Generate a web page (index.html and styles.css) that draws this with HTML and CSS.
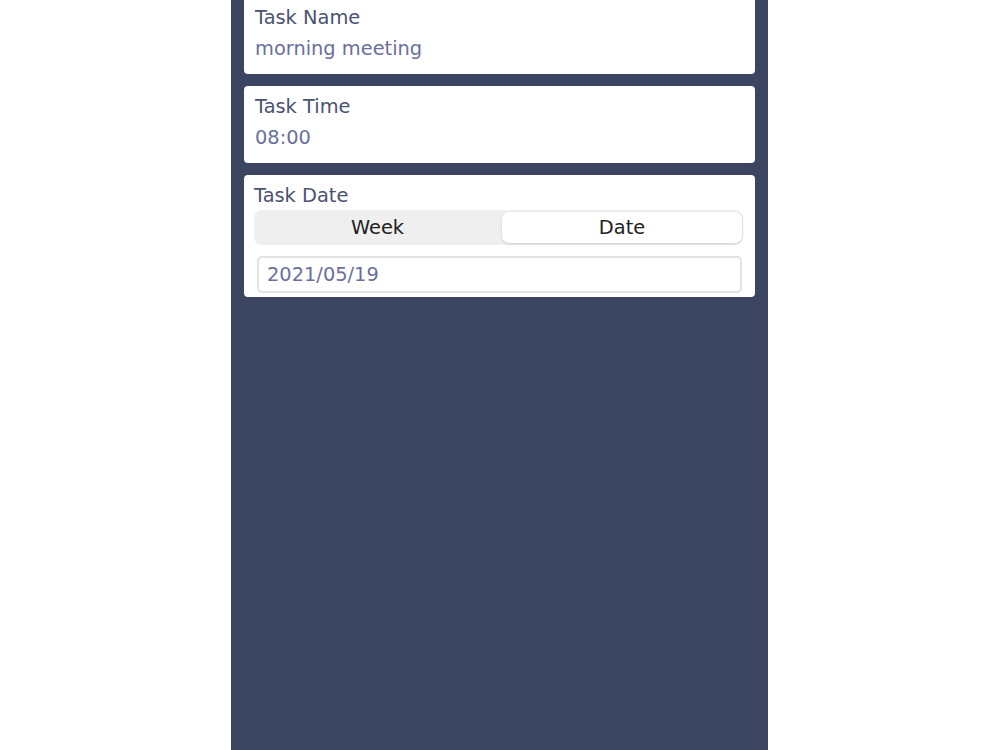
FILE: index.html
```html
<!DOCTYPE html>
<html lang="en">

<head>
  <meta charset="utf-8">
  <meta name="viewport" content="width=device-width, initial-scale=1">
  <title>Task</title>
  <link rel="stylesheet" href="styles.css">
</head>

<body>
  <div class="screen">
    <div class="card first">
      <p class="label">Task Name</p>
      <p class="value">morning meeting</p>
    </div>

    <div class="card">
      <p class="label">Task Time</p>
      <p class="value">08:00</p>
    </div>

    <div class="card date-card">
      <p class="label">Task Date</p>
      <div class="segmented">
        <button type="button" class="segment">Week</button>
        <button type="button" class="segment active">Date</button>
      </div>
      <input class="date-input" type="text" value="2021/05/19">
    </div>
  </div>
</body>

</html>
```

FILE: styles.css
```css
* {
  margin: 0;
  padding: 0;
  box-sizing: border-box;
}

html,
body {
  height: 100%;
}

body {
  font-family: 'DejaVu Sans', sans-serif;
  font-size: 19.4px;
  background-color: #fff;
  display: flex;
  justify-content: center;
}

.screen {
  width: 537px;
  margin-right: 1px;
  height: 100%;
  background-color: #3b4461;
  padding: 0 13px;
  display: flex;
  flex-direction: column;
  gap: 12px;
  overflow: hidden;
}

.card {
  background-color: #fff;
  border-radius: 4px;
  padding: 9px 11px 14px;
}

.card.first {
  margin-top: -3px;
}

.label {
  color: #4b5271;
  line-height: 23px;
}

.value {
  color: #6a6f9e;
  line-height: 23px;
  margin-top: 8px;
}

.date-card {
  padding: 9px 12px 4px 10px;
}

.segmented {
  margin-top: 3px;
  height: 35px;
  background-color: #efefef;
  border-radius: 8px;
  padding: 2px 1px 2px 2px;
  display: grid;
  grid-template-columns: 1fr 1fr;
}

.segment {
  font-family: inherit;
  font-size: 19.4px;
  color: #222;
  background: none;
  border: none;
  border-radius: 7px;
}

.segment.active {
  margin-left: 3px;
  background-color: #fff;
  box-shadow: 0 1px 3px rgba(0, 0, 0, 0.15);
}

.date-input {
  display: block;
  width: calc(100% - 4px);
  margin: 11px 0 0 3px;
  height: 37px;
  border: 2px solid #e2e2e2;
  border-radius: 5px;
  padding: 0 8px;
  font-family: inherit;
  font-size: 19.4px;
  color: #6a6f9e;
  outline: none;
}
```
